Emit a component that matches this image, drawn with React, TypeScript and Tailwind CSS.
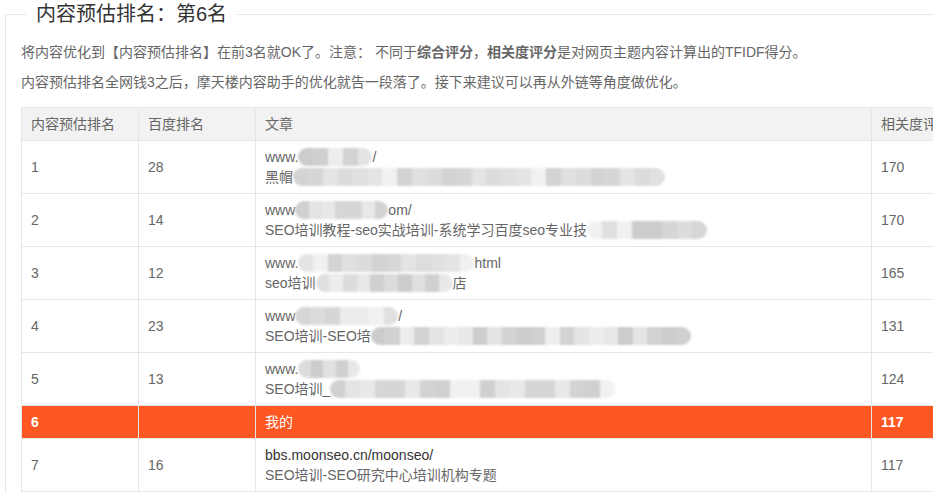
import React from "react";

type Part = string | { m: number };

const grays = ["#d6d6d6", "#e4e4e4", "#d0d0d0", "#ededed", "#dcdcdc", "#f1f1f1", "#d3d3d3", "#e8e8e8", "#cccccc", "#e0e0e0"];

function Mosaic({ w, seed }: { w: number; seed: number }) {
  const n = Math.ceil(w / 15);
  const cells = Array.from({ length: n }, (_, i) => grays[(seed * 7 + i * 3 + ((i * i + seed) % 5)) % grays.length]);
  return (
    <span
      className="inline-flex h-[18px] align-[-4px] overflow-hidden rounded-[9px] blur-[1px]"
      style={{ width: w }}
    >
      {cells.map((c, i) => (
        <span key={i} className="h-full flex-1" style={{ backgroundColor: c }} />
      ))}
    </span>
  );
}

function Line({ parts, seed }: { parts: Part[]; seed: number }) {
  return (
    <div className="whitespace-nowrap">
      {parts.map((p, i) =>
        typeof p === "string" ? <span key={i}>{p}</span> : <Mosaic key={i} w={p.m} seed={seed + i} />
      )}
    </div>
  );
}

const rows: { rank: string; baidu: string; l1: Part[]; l2: Part[]; score: string }[] = [
  { rank: "1", baidu: "28", l1: ["www.", { m: 74 }, "/"], l2: ["黑帽", { m: 372 }], score: "170" },
  { rank: "2", baidu: "14", l1: ["www", { m: 93 }, "om/"], l2: ["SEO培训教程-seo实战培训-系统学习百度seo专业技", { m: 120 }], score: "170" },
  { rank: "3", baidu: "12", l1: ["www.", { m: 176 }, "html"], l2: ["seo培训", { m: 137 }, "店"], score: "165" },
  { rank: "4", baidu: "23", l1: ["www", { m: 103 }, "/"], l2: ["SEO培训-SEO培", { m: 320 }], score: "131" },
  { rank: "5", baidu: "13", l1: ["www.", { m: 62 }], l2: ["SEO培训_", { m: 285 }], score: "124" },
];

const td = "border border-[#e6e6e6] px-[9px] py-[6px] leading-[20px] text-left align-middle";

export default function App() {
  return (
    <div
      className="w-[933px] h-[492px] overflow-hidden bg-white text-[#666] text-[14px]"
      style={{ fontFamily: '"Liberation Sans", "Noto Sans CJK SC", sans-serif' }}
    >
      <fieldset className="ml-[5px] w-[1100px] border border-[#e6e6e6] px-[15px] pb-[20px]">
        <legend className="ml-[5px] px-[10px] text-[20px] leading-[28px] text-[#333]">内容预估排名：第6名</legend>
        <p className="mt-[14px] leading-[20px]">
          将内容优化到【内容预估排名】在前3名就OK了。注意： 不同于<b>综合评分</b>，<b>相关度评分</b>是对网页主题内容计算出的TFIDF得分。
        </p>
        <p className="mt-[10px] leading-[20px]">内容预估排名全网钱3之后，摩天楼内容助手的优化就告一段落了。接下来建议可以再从外链等角度做优化。</p>
        <table className="mt-[15px] table-fixed border-collapse">
          <thead>
            <tr className="bg-[#f2f2f2]">
              <th className={`${td} w-[117px] font-normal`}>内容预估排名</th>
              <th className={`${td} w-[117px] font-normal`}>百度排名</th>
              <th className={`${td} w-[616px] font-normal`}>文章</th>
              <th className={`${td} w-[120px] font-normal`}>相关度评分</th>
            </tr>
          </thead>
          <tbody>
            {rows.map((r, i) => (
              <tr key={r.rank}>
                <td className={td}>{r.rank}</td>
                <td className={td}>{r.baidu}</td>
                <td className={td}>
                  <Line parts={r.l1} seed={i * 3} />
                  <Line parts={r.l2} seed={i * 3 + 1} />
                </td>
                <td className={td}>{r.score}</td>
              </tr>
            ))}
            <tr className="bg-[#ff5722] text-white">
              <td className={`${td} font-bold`}>6</td>
              <td className={td}></td>
              <td className={td}>我的</td>
              <td className={`${td} font-bold`}>117</td>
            </tr>
            <tr>
              <td className={td}>7</td>
              <td className={td}>16</td>
              <td className={td}>
                <div className="text-[#333]">bbs.moonseo.cn/moonseo/</div>
                <div>SEO培训-SEO研究中心培训机构专题</div>
              </td>
              <td className={td}>117</td>
            </tr>
          </tbody>
        </table>
      </fieldset>
    </div>
  );
}
